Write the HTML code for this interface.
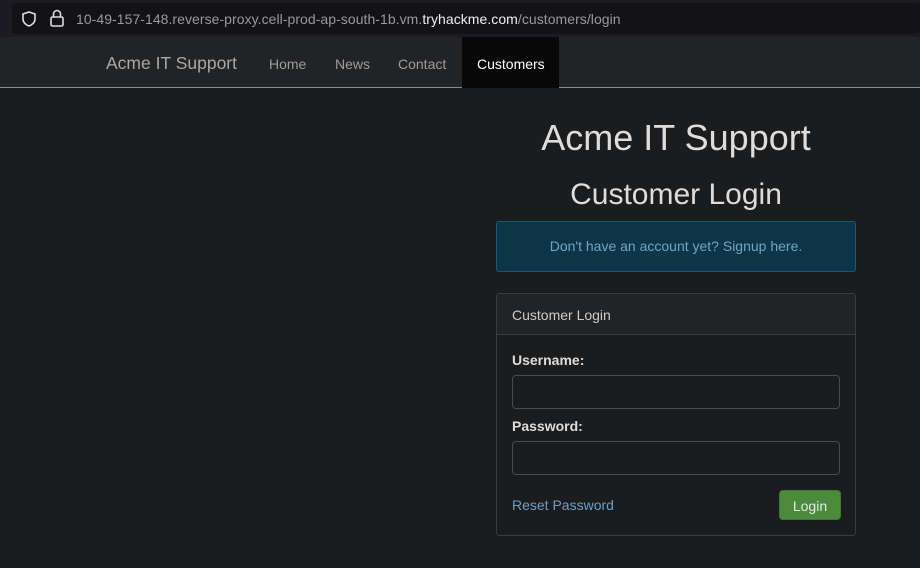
<!DOCTYPE html>
<html><head><meta charset="utf-8"><style>
*{box-sizing:border-box;margin:0;padding:0}
body{width:920px;height:568px;background:#1b1c1e;font-family:"Liberation Sans",sans-serif;overflow:hidden;position:relative;color:#ccc}
.top{position:absolute;left:0;top:0;width:920px;height:37px;background:#1c1b22}
.url{position:absolute;left:12px;top:3px;width:908px;height:31px;background:#131217;border-radius:4px}
.urltext{position:absolute;left:76px;top:11px;font-size:14px;color:#9a999e;letter-spacing:0.05px}
.urltext b{font-weight:normal;color:#f0f0f0}
.nav{position:absolute;left:0;top:37px;width:920px;height:51px;background:#222325;border-bottom:1px solid #8a8a8a}
.nav span{position:absolute;top:19px;font-size:14px;color:#9d9d9d}
.brand{font-size:17.5px!important;top:16px!important;color:#a8a8a8!important}
.active{position:absolute;left:462px;top:0;width:97px;height:51px;background:#080808}
h1{position:absolute;left:496px;width:360px;text-align:center;font-weight:normal;color:#ddd}
.alert{position:absolute;left:496px;top:221px;width:360px;height:51px;background:#0e3447;border:1px solid #1b5a6e;border-radius:3px;text-align:center;line-height:49px;font-size:14px;color:#6fa6c4}
.panel{position:absolute;left:496px;top:293px;width:360px;height:243px;border:1px solid #3a3b3d;border-radius:3px}
.ph{height:41px;background:#222325;border-bottom:1px solid #3a3b3d;padding:13px 15px;font-size:14px;color:#ccc}
label{position:absolute;left:15px;font-weight:bold;font-size:14px;color:#ddd}
.in{position:absolute;left:15px;width:328px;height:34px;border:1px solid #4a4b4d;border-radius:4px;background:#1b1c1e}
.reset{position:absolute;left:15px;top:203px;font-size:14px;color:#6a9fc9}
.btn{position:absolute;left:282px;top:196px;width:62px;height:30px;background:#4b8b3b;border:1px solid #3e7a30;border-radius:4px;color:#e8e8e8;font-size:14px;text-align:center;line-height:30px}
</style></head><body>
<div class="top"><div class="url">
<svg style="position:absolute;left:8px;top:7px" width="18" height="18" viewBox="0 0 18 18"><path d="M9 2 L15 4 V9 C15 12.5 12 15 9 16 C6 15 3 12.5 3 9 V4 Z" fill="none" stroke="#ddd" stroke-width="1.6"/></svg>
<svg style="position:absolute;left:37px;top:6px" width="16" height="18" viewBox="0 0 16 18"><rect x="2" y="8" width="12" height="9" rx="1.5" fill="none" stroke="#ddd" stroke-width="1.6"/><path d="M4.5 8 V5 A3.5 3.5 0 0 1 11.5 5 V8" fill="none" stroke="#ddd" stroke-width="1.6"/></svg>
</div>
<div class="urltext">10-49-157-148.reverse-proxy.cell-prod-ap-south-1b.vm.<b>tryhackme.com</b>/customers/login</div></div>
<div class="nav">
<div class="active"></div>
<span class="brand" style="left:106px">Acme IT Support</span>
<span style="left:269px">Home</span>
<span style="left:335px">News</span>
<span style="left:398px">Contact</span>
<span style="left:477px;color:#fff">Customers</span>
</div>
<h1 style="top:117px;font-size:36px">Acme IT Support</h1>
<h1 style="top:178px;font-size:30px">Customer Login</h1>
<div class="alert">Don't have an account yet? Signup here.</div>
<div class="panel">
<div class="ph">Customer Login</div>
<label style="top:58px">Username:</label>
<div class="in" style="top:81px"></div>
<label style="top:124px">Password:</label>
<div class="in" style="top:147px"></div>
<span class="reset">Reset Password</span>
<div class="btn">Login</div>
</div>
</body></html>
